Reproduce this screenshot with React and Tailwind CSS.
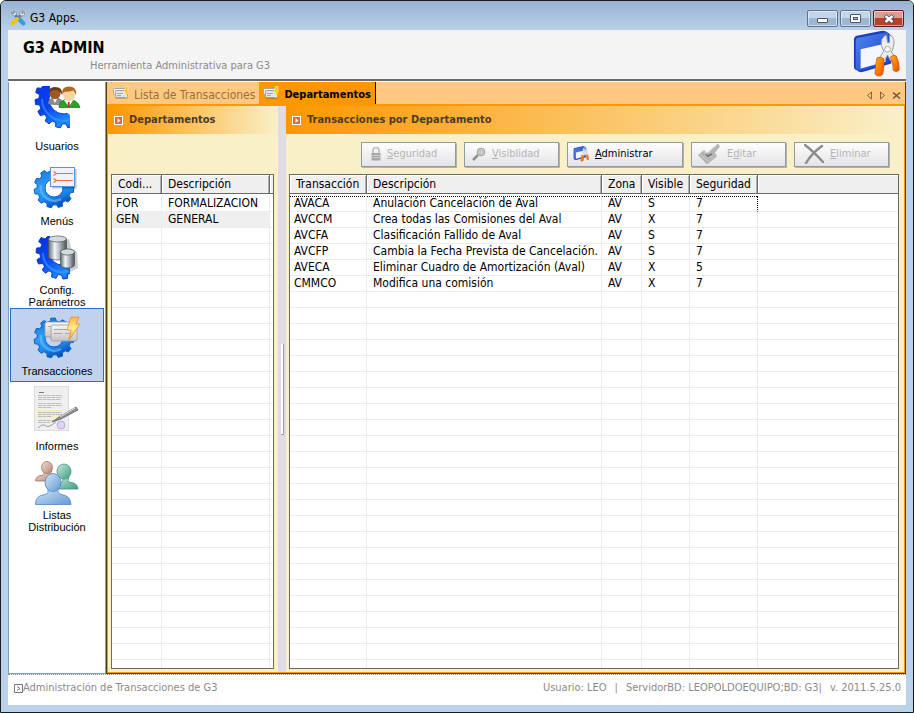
import React, { useState } from 'react';
import clsx from 'clsx';

const departamentos = [
  { codigo: 'FOR', descripcion: 'FORMALIZACION' },
  { codigo: 'GEN', descripcion: 'GENERAL' },
];

const transacciones = [
  ['AVACA', 'Anulación Cancelación de Aval', 'AV', 'S', '7'],
  ['AVCCM', 'Crea todas las Comisiones del Aval', 'AV', 'X', '7'],
  ['AVCFA', 'Clasificación Fallido de Aval', 'AV', 'S', '7'],
  ['AVCFP', 'Cambia la Fecha Prevista de Cancelación.', 'AV', 'S', '7'],
  ['AVECA', 'Eliminar Cuadro de Amortización (Aval)', 'AV', 'X', '5'],
  ['CMMCO', 'Modifica una comisión', 'AV', 'X', '7'],
];

// ---------- Icons ----------

// Outline of a toothed wheel with a round hole in it
function gearPath(cx, cy, outer, inner, hole, teeth) {
  const step = (Math.PI * 2) / teeth;
  const at = (r, a) => `${(cx + r * Math.cos(a)).toFixed(1)} ${(cy + r * Math.sin(a)).toFixed(1)}`;
  let d = '';
  for (let i = 0; i < teeth; i++) {
    const a = i * step + 0.1;
    d += `${i ? 'L' : 'M'}${at(inner, a - step * 0.32)} L${at(outer, a - step * 0.2)} L${at(outer, a + step * 0.2)} L${at(inner, a + step * 0.32)} `;
  }
  return `${d}Z M${cx - hole} ${cy} a${hole} ${hole} 0 1 0 ${hole * 2} 0 a${hole} ${hole} 0 1 0 ${-hole * 2} 0 Z`;
}

function IconDefs() {
  return (
    <svg className="absolute h-0 w-0" aria-hidden="true">
      <defs>
        <linearGradient id="gearDark" x1="0" y1="0" x2="0.8" y2="1">
          <stop offset="0.1" stopColor="#0a2fe0" />
          <stop offset="0.5" stopColor="#0a44f2" />
          <stop offset="0.8" stopColor="#1f8cff" />
          <stop offset="1" stopColor="#0a50d8" />
        </linearGradient>
        <linearGradient id="gearLight" x1="0" y1="0" x2="0.4" y2="1">
          <stop offset="0" stopColor="#1470d8" />
          <stop offset="0.5" stopColor="#2f9df5" />
          <stop offset="0.8" stopColor="#1c86ee" />
          <stop offset="1" stopColor="#0a55bd" />
        </linearGradient>
        <linearGradient id="metal" x1="0" y1="0" x2="1" y2="0">
          <stop offset="0" stopColor="#5f6870" />
          <stop offset="0.35" stopColor="#f4f6f8" />
          <stop offset="0.7" stopColor="#9aa2aa" />
          <stop offset="1" stopColor="#4a5158" />
        </linearGradient>
        <linearGradient id="card" x1="0" y1="0" x2="0" y2="1">
          <stop offset="0" stopColor="#f6f6f6" />
          <stop offset="1" stopColor="#c3c3c3" />
        </linearGradient>
        <linearGradient id="bolt" x1="0" y1="0" x2="0" y2="1">
          <stop offset="0" stopColor="#ffb347" />
          <stop offset="0.5" stopColor="#fff08a" />
          <stop offset="1" stopColor="#ff9a2e" />
        </linearGradient>
        <linearGradient id="pink" x1="0" y1="0" x2="1" y2="1">
          <stop offset="0" stopColor="#f0dcd6" />
          <stop offset="1" stopColor="#b98477" />
        </linearGradient>
        <linearGradient id="green" x1="0" y1="0" x2="1" y2="1">
          <stop offset="0" stopColor="#c9eadf" />
          <stop offset="1" stopColor="#3f9c83" />
        </linearGradient>
        <linearGradient id="blue" x1="0" y1="0" x2="1" y2="1">
          <stop offset="0" stopColor="#d2e7fa" />
          <stop offset="1" stopColor="#6299d2" />
        </linearGradient>
        <linearGradient id="appWindow" x1="0" y1="0" x2="1" y2="1">
          <stop offset="0" stopColor="#4f86f2" />
          <stop offset="1" stopColor="#1c3fc0" />
        </linearGradient>
        <linearGradient id="handle" x1="0" y1="0" x2="1" y2="1">
          <stop offset="0" stopColor="#ffb400" />
          <stop offset="1" stopColor="#f04a10" />
        </linearGradient>
        <clipPath id="lowerLeft">
          <path d="M0 3 H17 V16 L26 24 L37 32 V51 H0 Z" />
        </clipPath>
      </defs>
    </svg>
  );
}

const menuSvg = { viewBox: '0 0 48 51', className: 'h-[51px] w-12 shrink-0', 'aria-hidden': true };

function UsuariosIcon() {
  return (
    <svg {...menuSvg}>
      <g clipPath="url(#lowerLeft)">
        <path d={gearPath(31, 16, 29, 25, 15, 15)} fill="url(#gearDark)" stroke="#0a3fc0" strokeLinejoin="round" fillRule="evenodd" />
        <path d="M9 16 a22 22 0 0 0 27 21" fill="none" stroke="#3aa0ff" strokeWidth="2" opacity="0.6" />
      </g>
      <path d="M15 21 q0-6 7-6 q8 0 8 7 z" fill="#8a8d94" stroke="#5c5f66" strokeWidth="0.6" />
      <path d="M20 16 l2 4 2-4z" fill="#fff" />
      <circle cx="22" cy="10.500" r="5.500" fill="#9c5a22" />
      <path d="M16 11 q-1-7 6-7 q8 0 7 8 q-2-5-7-5 q-4 0-6 4z" fill="#6b3a14" />
      <path d="M26 24.500 q0-8 9-8 q10 0 12 8 z" fill="#27a327" stroke="#127512" strokeWidth="0.7" />
      <path d="M31 17 l5 7 4-7z" fill="#fff" />
      <path d="M35 19 h1.500 l0.500 5 h-2.500z" fill="#d8232a" />
      <circle cx="36" cy="12" r="6" fill="#f8d3a4" />
      <path d="M29.500 12 q-2-8 6-8.500 q9 0 7.500 9 q-1-4-3-5 q-6 2-8 1 q-2 1-2.500 3.500z" fill="#b06a20" />
    </svg>
  );
}

function MenusIcon() {
  return (
    <svg {...menuSvg}>
      <path d={gearPath(21, 30, 20, 17, 9, 11)} fill="url(#gearLight)" stroke="#0f62c4" strokeLinejoin="round" fillRule="evenodd" />
      <path d="M8 27 a13.500 13.500 0 0 0 20 14" fill="none" stroke="#6cc4ff" strokeWidth="2.500" opacity="0.6" />
      <rect x="19" y="11" width="24.500" height="19.500" fill="#000" opacity="0.25" />
      <rect x="17.500" y="9.500" width="24" height="19" fill="#eaf3fe" stroke="#5b93d8" />
      <path d="M20.500 13.500 l3 2 -3 2 M20.500 20.500 l3 2 -3 2 M24 15.500 h16 M24 22.500 h16" fill="none" stroke="#ef6a3a" strokeWidth="1.2" />
    </svg>
  );
}

function Cylinder({ x, y, w, h }) {
  const r = w / 2;
  return (
    <g stroke="#4c545c" strokeWidth="0.7">
      <path d={`M${x} ${y + 3} v${h} a${r} 3 0 0 0 ${w} 0 v${-h}z`} fill="url(#metal)" />
      <ellipse cx={x + r} cy={y + 3} rx={r} ry="3" fill="#d5dbe1" />
    </g>
  );
}

function ConfigIcon() {
  return (
    <svg {...menuSvg}>
      <g clipPath="url(#lowerLeft)">
        <path d={gearPath(29, 20, 26, 22, 12, 14)} fill="url(#gearDark)" stroke="#0a3fc0" strokeLinejoin="round" fillRule="evenodd" />
        <path d="M10 20 a19 19 0 0 0 25 18" fill="none" stroke="#3aa0ff" strokeWidth="2" opacity="0.6" />
      </g>
      <path d="M30 8 l6-2 2 9 6 4 1 16 -8 4 -8-6 z" fill="#000" opacity="0.2" />
      <Cylinder x={15.5} y={3} w={18} h={18} />
      <Cylinder x={27.5} y={16} w={14} h={13} />
    </svg>
  );
}

function TransaccionesIcon() {
  return (
    <svg {...menuSvg}>
      <path d={gearPath(21, 30, 20, 17, 9, 11)} fill="url(#gearLight)" stroke="#0f62c4" strokeLinejoin="round" fillRule="evenodd" />
      <path d="M8 27 a13.500 13.500 0 0 0 20 14" fill="none" stroke="#6cc4ff" strokeWidth="2.500" opacity="0.6" />
      <rect x="12" y="14" width="26" height="15" rx="2" fill="url(#card)" stroke="#9a9a9a" strokeWidth="0.8" />
      <rect x="18" y="17" width="26" height="16" rx="2" fill="url(#card)" stroke="#9a9a9a" strokeWidth="0.8" />
      <path d="M15 18.500 h3 M21 21.500 h16 M21 25.500 h8 M32 25.500 h6" stroke="#a8a8a8" strokeWidth="1.2" />
      <path d="M38 9 h8 l-3 7 h4 l-11 16 2-10 h-4 z" fill="url(#bolt)" stroke="#f08a3c" strokeWidth="0.8" />
    </svg>
  );
}

function InformesIcon() {
  return (
    <svg {...menuSvg}>
      <rect x="1.500" y="3.500" width="34" height="44" fill="#efefef" stroke="#dcdcdc" />
      <rect x="4" y="27" width="25" height="8" fill="#f6efb4" />
      <path d="M6 9.500 h5" stroke="#777" />
      <path
        d="M5 12.500 h24 M5 14.500 h24 M5 16.500 h23 M5 20.500 h24 M5 22.500 h24 M5 24.500 h13 M5 29.500 h24 M5 31.500 h24 M5 33.500 h14 M5 37.500 h18 M5 39.500 h12"
        stroke="#bdbdbd"
        strokeDasharray="4 0.5"
      />
      <path d="M5 45 q5-5 8-2 q2 2 10-4" fill="none" stroke="#777" strokeWidth="0.7" />
      <circle cx="28" cy="42" r="4" fill="#dcd6f0" stroke="#b9addf" />
      <path d="M19 39 l7-5 17-10 2 3 -17 9 z" fill="#8d9196" stroke="#55595e" strokeWidth="0.700" />
      <path d="M27 34 l15-9" stroke="#e8eaec" strokeWidth="1" />
    </svg>
  );
}

function ListasIcon() {
  return (
    <svg {...menuSvg}>
      <g fill="url(#pink)" stroke="#a87565" strokeWidth="0.8">
        <path d="M2.500 23 q0-5 7-6 q3-1 1-4 h8 q-2 3 1 4 l3 6 z" />
        <ellipse cx="14" cy="9.500" rx="5.500" ry="6" />
      </g>
      <g fill="url(#green)" stroke="#3f947c" strokeWidth="0.8">
        <path d="M22 31 q1-6 7-7 q2-1 0-5 h7 q-2 4 0 5 q9 1 9 7 z" />
        <ellipse cx="31" cy="13.500" rx="7" ry="7.500" />
      </g>
      <g fill="url(#blue)" stroke="#4e86c0" strokeWidth="0.8">
        <path d="M2.500 46.500 q0-9 9-10 q5-1 3-6 h11 q-2 5 3 6 q9 1 9.500 10 z" />
        <ellipse cx="20" cy="24.500" rx="8" ry="9" />
      </g>
    </svg>
  );
}

function TitleIcon() {
  return (
    <svg viewBox="0 0 16 16" className="h-4 w-4" aria-hidden="true">
      <path d="M3 3 l9 9" stroke="#2b7fc4" strokeWidth="2.600" />
      <path d="M9.500 9.500 l4 4" stroke="#2f9fe6" strokeWidth="4" strokeLinecap="round" />
      <path d="M13 3 l-8 8" stroke="#7a8088" strokeWidth="2.600" />
      <path d="M1.500 2 q0 4 3 4 l2-2 q0-3-3-3 l1 2 -1.500 1 z M14.500 2 q1 4-3 4 l-2-2 q0-3 4-3 l-2 2 1 1 z" fill="#e9edf1" stroke="#6f757c" strokeWidth="0.6" />
      <path d="M7 9 l-4.500 4.500" stroke="#f2c21a" strokeWidth="4" strokeLinecap="round" />
    </svg>
  );
}

function ToolsIcon({ className }) {
  return (
    <svg viewBox="0 0 50 50" className={className} aria-hidden="true">
      <path d="M2 10 Q2 7 5 6 L30 1 Q34 0 38 3 L41 6 V35 L10 44 Q7 44 5 42 Q2 41 2 38 Z" fill="#1c3fc0" />
      <path d="M4 11 Q4 8 7 8 L35 2.500 Q38 2 38 7 V34 L9 42 Q4 42 4 38 Z" fill="url(#appWindow)" />
      <path d="M9 20 L35 14 V33 L9 40 Z" fill="#f4f7ff" />
      <path d="M31 10 Q33 6 36 5 L37 13 39 13 39 5 Q46 8 43 18 Q42 22 41 23 L46 29 40 32 37 26 34 32 28 30 33 22 Q29 16 31 10 Z" fill="#e9ebee" stroke="#8c9198" strokeWidth="0.9" />
      <circle cx="37" cy="20" r="3" fill="#fafafa" stroke="#a5a9ae" />
      <path d="M26 29 Q30 27 33 30 Q34 37 32 46 Q28 50 24 46 Q24 37 26 29 Z" fill="url(#handle)" stroke="#c8460a" strokeWidth="0.700" />
      <path d="M40 28 Q43 25 46 27 Q50 34 49 42 Q46 45 43 42 Q43 34 40 28 Z" fill="url(#handle)" stroke="#c8460a" strokeWidth="0.700" />
    </svg>
  );
}

function TabIcon() {
  return (
    <svg viewBox="0 0 16 14" className="h-[14px] w-4 shrink-0" aria-hidden="true">
      <path d="M2 11 h10 l3 2 H3z" fill="#000" opacity="0.2" />
      <rect x="0.500" y="2.500" width="12" height="6" rx="1" fill="#f1f1f1" stroke="#a5a5a5" />
      <rect x="2.500" y="4.500" width="12" height="7" rx="1" fill="#e3e3e3" stroke="#a0a0a0" />
      <path d="M4 7.500 h6 M4 9.500 h4" stroke="#a8a8a8" />
      <path d="M12.500 0.500 h3 l-1 4 h1 l-3 7 v-5 h-1.500z" fill="#f6c42a" stroke="#fff3b0" strokeWidth="0.6" />
    </svg>
  );
}

function PanelArrow() {
  return (
    <svg viewBox="0 0 9 9" className="h-[9px] w-[9px] shrink-0" aria-hidden="true">
      <rect x="0.500" y="0.500" width="8" height="8" fill="#f0632c" stroke="#fff" />
      <path d="M3.500 2 v5 l3-2.500z" fill="#fff" />
    </svg>
  );
}

function LockIcon() {
  return (
    <svg viewBox="0 0 10 14" className="h-[14px] w-[10px] shrink-0" aria-hidden="true">
      <path d="M2 6 V3.500 a3 3 0 0 1 6 0 V6" fill="none" stroke="#b9b9b9" strokeWidth="1.500" />
      <rect x="0.500" y="6" width="9" height="7.500" fill="#a9a9a9" />
      <path d="M0.500 8.500 h9 M0.500 10.500 h9" stroke="#c9c9c9" />
    </svg>
  );
}

function LensIcon() {
  return (
    <svg viewBox="0 0 14 14" className="h-[14px] w-[14px] shrink-0" aria-hidden="true">
      <path d="M1 13 l5-5" stroke="#8f8f8f" strokeWidth="2.500" />
      <circle cx="9" cy="5" r="3.800" fill="#c9c9c9" stroke="#9d9d9d" />
    </svg>
  );
}

function EditIcon() {
  return (
    <svg viewBox="0 0 24 22" className="h-[22px] w-6 shrink-0" aria-hidden="true">
      <path d="M1 12 l6-5 3 3 L21 0.500 l2 3 -5 6 2 4 -10 8 z" fill="#b5b5b5" />
      <path d="M4 12 l8 7 M7 9 l9 6 M12 9 l7-6" stroke="#cfcfcf" />
      <path d="M9 11 l2 2 4-2" fill="none" stroke="#6f6f6f" strokeWidth="1.500" />
    </svg>
  );
}

function DeleteIcon() {
  return (
    <svg viewBox="0 0 20 20" className="h-5 w-5 shrink-0" aria-hidden="true">
      <path d="M1 1 q8 6 18 17 M18 2 Q8 9 2 19" fill="none" stroke="#8b8b8b" strokeWidth="2.400" strokeLinecap="round" />
    </svg>
  );
}

// ---------- Window chrome ----------

function TitleBar() {
  const base = 'flex h-[17px] items-center justify-center rounded-[2px] border shadow-[inset_0_0_0_1px_rgba(255,255,255,0.5)]';
  const plain = 'border-[#5b7494] bg-linear-to-b from-[#c3d5e9] from-50% to-[#9db7d3] to-50%';
  return (
    <div className="flex h-[29px] shrink-0 items-start justify-between bg-linear-to-b from-[#98b3d2] to-[#b9d1ea] pr-[9px] pl-2">
      <div className="flex items-center gap-1 pt-[9px] pl-px">
        <TitleIcon />
        <span className="text-xs leading-4 text-black">G3 Apps.</span>
      </div>
      <div className="mt-[9px] flex gap-[2px]">
        <button aria-label="Minimizar" className={clsx(base, plain, 'w-[31px]')}>
          <span className="mt-1 h-[5px] w-[11px] rounded-[1px] border border-[#4c5666] bg-white" />
        </button>
        <button aria-label="Maximizar" className={clsx(base, plain, 'w-[31px]')}>
          <span className="flex h-[9px] w-[11px] items-center justify-center rounded-[1px] border border-[#4c5666] bg-white">
            <span className="h-[3px] w-[5px] border border-[#4c5666] bg-[#a9c0dc]" />
          </span>
        </button>
        <button
          aria-label="Cerrar"
          className={clsx(base, 'w-[31px] border-[#5a1a1e] bg-linear-to-b from-[#dd9c90] from-50% to-[#b7402e] to-50%')}
        >
          <svg viewBox="0 0 12 10" className="h-[10px] w-3" aria-hidden="true">
            <path d="M2 1.500 l8 7 M10 1.500 l-8 7" stroke="#4c4f60" strokeWidth="4" />
            <path d="M2.500 2 l7 6 M9.500 2 l-7 6" stroke="#fff" strokeWidth="2.400" />
          </svg>
        </button>
      </div>
    </div>
  );
}

function Header() {
  return (
    <header className="flex h-[51px] shrink-0 items-start justify-between border-b-2 border-[#6b696b] bg-[#f4f4f4] pr-[5px] pl-[15px]">
      <div className="pt-2">
        <h1 className="text-[16px] leading-5 font-bold text-black">G3 ADMIN</h1>
        <p className="pl-[67px] text-[11px] leading-4 text-[#8a8a8a]">Herramienta Administrativa para G3</p>
      </div>
      <ToolsIcon className="h-12 w-[50px]" />
    </header>
  );
}

const menu = [
  { id: 'usuarios', label: 'Usuarios', Icon: UsuariosIcon },
  { id: 'menus', label: 'Menús', Icon: MenusIcon },
  { id: 'config', label: 'Config. Parámetros', Icon: ConfigIcon },
  { id: 'transacciones', label: 'Transacciones', Icon: TransaccionesIcon },
  { id: 'informes', label: 'Informes', Icon: InformesIcon },
  { id: 'listas', label: 'Listas Distribución', Icon: ListasIcon },
];

function Sidebar({ active, onSelect }) {
  return (
    <nav className="flex w-[98px] shrink-0 flex-col gap-px border border-t-0 border-[#7f9db9] bg-white px-px pt-px font-['Liberation_Sans',sans-serif]">
      {menu.map(({ id, label, Icon }) => (
        <button
          key={id}
          onClick={() => onSelect(id)}
          className={clsx(
            'flex h-[74px] flex-col items-center outline -outline-offset-1',
            active === id ? 'bg-[#c1d2ee] outline-[#316ac5]' : 'outline-transparent'
          )}
        >
          <Icon />
          <span className="flex h-6 w-[70px] shrink-0 items-center justify-center text-center text-[11px] leading-3 text-black">
            {label}
          </span>
        </button>
      ))}
    </nav>
  );
}

function TabStrip() {
  return (
    <div className="flex h-6 shrink-0 items-stretch justify-between border-b-2 border-[#fd9700] bg-[#fdc980] text-xs">
      <div role="tablist" className="flex">
        <button role="tab" aria-selected="false" className="flex items-center gap-[5px] pr-1 pl-[6px] text-[#97713d]">
          <TabIcon />
          <span className="pt-1">Lista de Transacciones</span>
        </button>
        <button
          role="tab"
          aria-selected="true"
          className="flex items-center gap-[5px] border-r border-black bg-[#fd9700] pr-1 pl-1 text-black"
        >
          <TabIcon />
          <span className="pt-1 text-[11px] font-bold">Departamentos</span>
        </button>
      </div>
      <div className="flex items-center gap-[6px] pt-1 pr-1">
        <button aria-label="Anterior">
          <svg viewBox="0 0 7 9" className="h-[9px] w-[7px]"><path d="M5.500 1 v7 L1.500 4.500z" fill="none" stroke="#7d6340" /></svg>
        </button>
        <button aria-label="Siguiente">
          <svg viewBox="0 0 7 9" className="h-[9px] w-[7px]"><path d="M1.500 1 v7 L5.500 4.500z" fill="none" stroke="#7d6340" /></svg>
        </button>
        <button aria-label="Cerrar pestaña">
          <svg viewBox="0 0 9 9" className="h-[9px] w-[9px]"><path d="M1 1.500 l7 6 M8 1.500 l-7 6" stroke="#6e5636" strokeWidth="1.600" /></svg>
        </button>
      </div>
    </div>
  );
}

function PanelHeader({ title }) {
  return (
    <div className="flex h-7 shrink-0 items-center gap-[6px] bg-linear-to-r/srgb from-[#fd9700] to-[#f9f0c8] pl-[6px]">
      <PanelArrow />
      <h2 className="text-[11px] font-bold whitespace-nowrap text-[#4a3c28]">{title}</h2>
    </div>
  );
}

// ---------- Grid ----------

function Grid({ columns, widths, rows, selected, focused }) {
  return (
    <div className="min-h-0 flex-1 overflow-hidden border border-[#6b686a] bg-white">
      <table className="h-full w-full table-fixed border-separate border-spacing-0 text-left text-xs leading-[15px] text-black">
        <colgroup>
          {widths.map((w, i) => <col key={i} className={w} />)}
          <col />
        </colgroup>
        <thead>
          <tr>
            {columns.map((c) => (
              <th key={c} className="h-[21px] p-0 align-top font-normal">
                <div className="h-[19px] truncate border-r border-b border-[#6b686a] bg-[#efefef] pl-[6px] leading-[19px] shadow-[inset_1px_1px_0_#fff,inset_-1px_0_0_#b0b0b0]">
                  {c}
                </div>
              </th>
            ))}
            <td className="h-[21px] p-0 align-top">
              <div className="h-[19px] border-b border-[#6b686a] bg-[#efefef] shadow-[inset_1px_1px_0_#fff]" />
            </td>
          </tr>
        </thead>
        <tbody>
          {rows.map((row, r) => (
            <tr key={row[0]}>
              {row.map((value, i) => (
                <td
                  key={i}
                  className={clsx(
                    'h-4 border-r border-b border-[#ededf0] py-0 pr-0 whitespace-nowrap',
                    i === 0 ? 'pl-1' : 'pl-[6px]',
                    r === selected && 'bg-[#efefef]',
                    r === focused && 'bg-[repeating-linear-gradient(to_right,#000_0_1px,transparent_1px_2px)] bg-[length:100%_1px] bg-no-repeat',
                    r === focused && i === row.length - 1 && 'border-r-black [border-right-style:dotted]'
                  )}
                >
                  {value}
                </td>
              ))}
              <td className="h-4 border-b border-[#ededf0] p-0" />
            </tr>
          ))}
          {/* empty lines down to the bottom edge */}
          <tr className="h-full">
            {columns.map((c) => (
              <td key={c} className="border-r border-[#ededf0] bg-[repeating-linear-gradient(to_bottom,transparent_0_15px,#ededf0_15px_16px)] p-0" />
            ))}
            <td className="bg-[repeating-linear-gradient(to_bottom,transparent_0_15px,#ededf0_15px_16px)] p-0" />
          </tr>
        </tbody>
      </table>
    </div>
  );
}

function ToolButton({ icon, before = '', hotkey, after, width, disabled }) {
  return (
    <button
      disabled={disabled}
      className={clsx(
        'flex h-[25px] items-center gap-[6px] border border-[#8f9aa3] bg-linear-to-b from-[#fdfdfd] to-[#e4e4e8] text-[11px] shadow-[1px_1px_0_0_#b5b3a4]',
        width,
        disabled ? 'text-[#b4b4b4]' : 'text-black'
      )}
    >
      {icon}
      <span>{before}<u>{hotkey}</u>{after}</span>
    </button>
  );
}

function Toolbar() {
  return (
    <div className="flex h-10 shrink-0 items-center justify-end gap-2 pr-[15px]">
      <ToolButton disabled width="w-[95px] pl-[9px]" icon={<LockIcon />} hotkey="S" after="eguridad" />
      <ToolButton disabled width="w-[95px] pl-[7px]" icon={<LensIcon />} hotkey="V" after="isiblidad" />
      <ToolButton width="w-[116px] pl-[5px]" icon={<ToolsIcon className="h-4 w-4" />} hotkey="A" after="dministrar" />
      <ToolButton disabled width="w-[95px] pl-[5px]" icon={<EditIcon />} before="E" hotkey="d" after="itar" />
      <ToolButton disabled width="w-[95px] pl-[9px]" icon={<DeleteIcon />} hotkey="E" after="liminar" />
    </div>
  );
}

function StatusBar() {
  return (
    <footer className="flex h-[31px] shrink-0 items-start justify-between border-t border-dotted border-[#8a8a8a] bg-white pt-1 pr-[5px] pl-[6px] text-[11px] leading-[18px] text-[#8a8a8a]">
      <div className="flex items-center">
        <svg viewBox="0 0 9 9" className="h-[9px] w-[9px]" aria-hidden="true">
          <path d="M0.500 0.500 h8 v8 h-8z M3 2.500 l3 2 -3 2" fill="none" stroke="#777" />
        </svg>
        <span>Administración de Transacciones de G3</span>
      </div>
      <div className="flex gap-2 whitespace-pre">
        <span>Usuario: LEO</span>
        <span>|</span>
        <span>ServidorBD: LEOPOLDOEQUIPO;BD: G3|</span>
        <span>v. 2011.5.25.0</span>
      </div>
    </footer>
  );
}

export default function App() {
  const [section, setSection] = useState('transacciones');

  return (
    <div className="flex h-screen flex-col overflow-hidden rounded-t-[6px] border border-[#1a1a1a] bg-[#b9d1ea] font-['DejaVu_Sans_Condensed','Noto_Sans',sans-serif]">
      <IconDefs />
      <TitleBar />
      <div className="mr-[7px] mb-[7px] ml-[7px] flex min-h-0 flex-1 flex-col bg-white">
        <Header />
        <div className="flex min-h-0 flex-1 pt-px">
          <Sidebar active={section} onSelect={setSection} />
          <main className="flex min-w-0 flex-1 flex-col border border-t-0 border-[#5a3a08] bg-[#f9f0c8]">
            <TabStrip />
            <div className="flex min-h-0 flex-1 border-x border-b border-[#fd9700]">
              <section className="flex w-[170px] shrink-0 flex-col">
                <PanelHeader title="Departamentos" />
                <div className="flex min-h-0 flex-1 flex-col pt-10 pr-1 pb-[3px] pl-[3px]">
                  <Grid
                    columns={['Codi...', 'Descripción']}
                    widths={['w-[50px]', 'w-[108px]']}
                    rows={departamentos.map((d) => [d.codigo, d.descripcion])}
                    selected={1}
                  />
                </div>
              </section>
              <div className="flex w-2 shrink-0 items-center justify-center bg-[#dddbe3]">
                <div className="h-[91px] w-[3px] border-r border-b border-[#9c9aa4] bg-white" />
              </div>
              <section className="flex min-w-0 flex-1 flex-col">
                <PanelHeader title="Transacciones por Departamento" />
                <Toolbar />
                <div className="flex min-h-0 flex-1 flex-col pr-[5px] pb-[3px] pl-[3px]">
                  <Grid
                    columns={['Transacción', 'Descripción', 'Zona', 'Visible', 'Seguridad']}
                    widths={['w-[77px]', 'w-[235px]', 'w-10', 'w-12', 'w-[68px]']}
                    rows={transacciones}
                    focused={0}
                  />
                </div>
              </section>
            </div>
          </main>
        </div>
        <StatusBar />
      </div>
    </div>
  );
}
